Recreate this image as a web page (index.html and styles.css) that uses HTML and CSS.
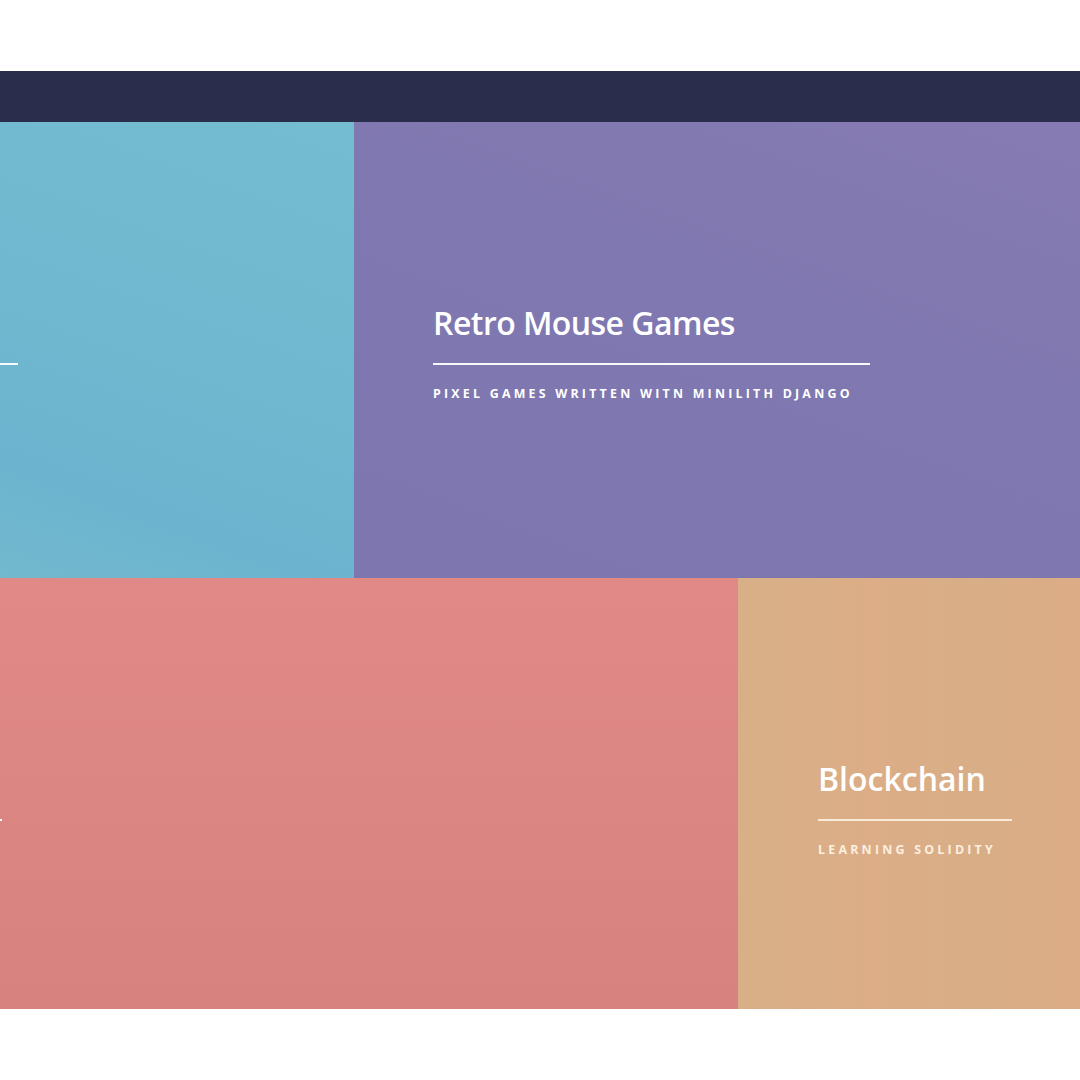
FILE: index.html
```html
<!DOCTYPE html>
<html>
<head>
<meta charset="utf-8">
<link rel="stylesheet" href="styles.css">
</head>
<body>
<div class="top-space"></div>
<header class="navbar"></header>
<main class="grid">
  <section class="row row-one">
    <article class="tile tile-cyan">
      <div class="tile-content shifted-cyan">
        <h2 class="tile-title">Portfolio Website</h2>
        <div class="tile-rule"></div>
        <p class="tile-sub">Built with django and sass</p>
      </div>
    </article>
    <article class="tile tile-purple">
      <div class="tile-content">
        <h2 class="tile-title">Retro Mouse Games</h2>
        <div class="tile-rule"></div>
        <p class="tile-sub">Pixel games written witn minilith django</p>
      </div>
    </article>
  </section>
  <section class="row row-two">
    <article class="tile tile-pink">
      <div class="tile-content shifted-pink">
        <h2 class="tile-title">Data Science</h2>
        <div class="tile-rule"></div>
        <p class="tile-sub">Machine learning notes</p>
      </div>
    </article>
    <article class="tile tile-tan">
      <div class="tile-content">
        <h2 class="tile-title">Blockchain</h2>
        <div class="tile-rule"></div>
        <p class="tile-sub">Learning solidity</p>
      </div>
    </article>
  </section>
</main>
</body>
</html>
```
FILE: styles.css
```css
* { box-sizing: border-box; }
html, body { margin: 0; padding: 0; background: #ffffff; }
body { font-family: "Open Sans", "Noto Sans", sans-serif; overflow: hidden; width: 1080px; height: 1080px; }

.top-space { height: 71px; }
.navbar { height: 51px; background: #2a2d4b; }

.grid { display: flex; flex-direction: column; }
.row { display: flex; overflow: hidden; }
.row-one { height: 456px; }
.row-two { height: 431px; }

.tile { position: relative; overflow: hidden; padding: 0 0 0 79px; }
.tile-cyan { width: 354px; background: linear-gradient(200deg, #74bccf 0%, #70b8cf 50%, #6cb3cf 80%, #72b9ce 100%); }
.tile-purple { width: 726px; background: linear-gradient(200deg, #877bb3 0%, #8078b0 40%, #7e77af 100%); }
.tile-pink { width: 738px; background: linear-gradient(180deg, #e08986 0%, #dd8785 40%, #d8827f 100%); }
.tile-tan { width: 342px; padding-left: 80px; background: linear-gradient(90deg, #d7b087 0%, #dcad86 40%, #d8ae87 70%, #dcac86 100%); }

.tile-content { display: inline-flex; flex-direction: column; align-items: flex-start; padding-top: 179px; }
.shifted-cyan { margin-left: -379px; width: 318px; }
.shifted-pink { margin-left: -350px; width: 273px; }

.tile-title {
  margin: 0;
  color: #ffffff;
  font-weight: 600;
  font-size: 32px;
  line-height: 44px;
  letter-spacing: -0.3px;
  white-space: nowrap;
}
.tile-purple .tile-title { letter-spacing: -0.55px; }
.tile-tan .tile-title { letter-spacing: 0px; }
.tile-rule { height: 2px; background: #ffffff; opacity: 0.95; align-self: stretch; margin-top: 18px; }
.tile-purple .tile-rule { width: 437px; align-self: auto; }
.tile-tan .tile-rule { width: 194px; align-self: auto; background: #fbeedc; }
.tile-sub {
  margin: 21px 0 0 0;
  color: #ffffff;
  font-size: 12.4px;
  font-weight: 700;
  letter-spacing: 3.23px;
  text-transform: uppercase;
  white-space: nowrap;
  line-height: 16px;
}
.tile-tan .tile-sub { color: #fbefe0; }
```
